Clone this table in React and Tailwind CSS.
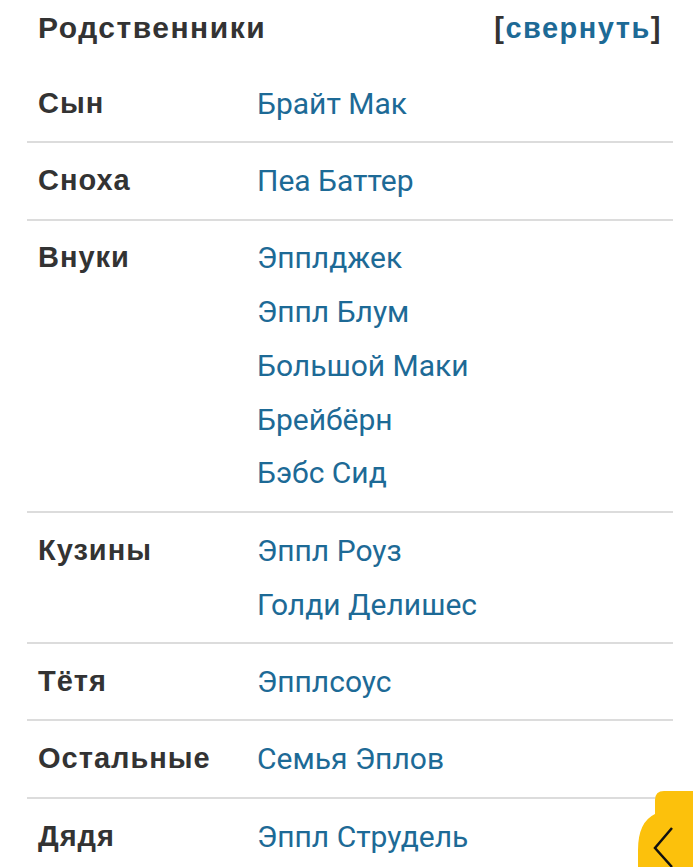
import React from 'react'

const rows = [
  { label: 'Сын', values: ['Брайт Мак'] },
  { label: 'Сноха', values: ['Пеа Баттер'] },
  { label: 'Внуки', values: ['Эпплджек', 'Эппл Блум', 'Большой Маки', 'Брейбёрн', 'Бэбс Сид'] },
  { label: 'Кузины', values: ['Эппл Роуз', 'Голди Делишес'] },
  { label: 'Тётя', values: ['Эпплсоус'] },
  { label: 'Остальные', values: ['Семья Эплов'] },
  { label: 'Дядя', values: ['Эппл Струдель'] },
]

function App() {
  return (
    <div className="relative h-[867px] w-[700px] overflow-hidden bg-white font-['Roboto',sans-serif]">
      <div className="flex h-[66px] items-start justify-between px-[38px] pt-[8px] font-['Liberation_Sans',sans-serif] text-[29px] font-bold leading-[40px] tracking-[1.5px] text-[#333333]">
        <h2 className="text-[30px]">Родственники</h2>
        <span>
          [<span className="text-[#1d6a96]">свернуть</span>]
        </span>
      </div>

      <div className="mx-[27px]">
        {rows.map((row, i) => (
          <div
            key={row.label}
            className={`flex py-[10.8px] ${i < rows.length - 1 ? 'border-b-2 border-[#dcdcdc]' : ''}`}
          >
            <div className="w-[230px] shrink-0 pl-[11px] font-['Liberation_Sans',sans-serif] text-[29px] font-bold leading-[53.75px] tracking-[1px] text-[#333333]">
              {row.label}
            </div>
            <div className="flex flex-col">
              {row.values.map((v) => (
                <a key={v} className="text-[30px] leading-[53.75px] text-[#1d6a96]">
                  {v}
                </a>
              ))}
            </div>
          </div>
        ))}
      </div>

      <svg className="absolute left-[636px] top-[790px]" width="64" height="77" viewBox="0 0 64 77">
        <path d="M19 10 Q19 1 28 1 L57 1 L57 77 L2 77 L2 60 Q2 32 19 24 Z" fill="#fcc10c" />
        <path d="M36 38 L19 58 L36 77" fill="none" stroke="#111111" strokeWidth="2.5" />
      </svg>
    </div>
  )
}

export default App
